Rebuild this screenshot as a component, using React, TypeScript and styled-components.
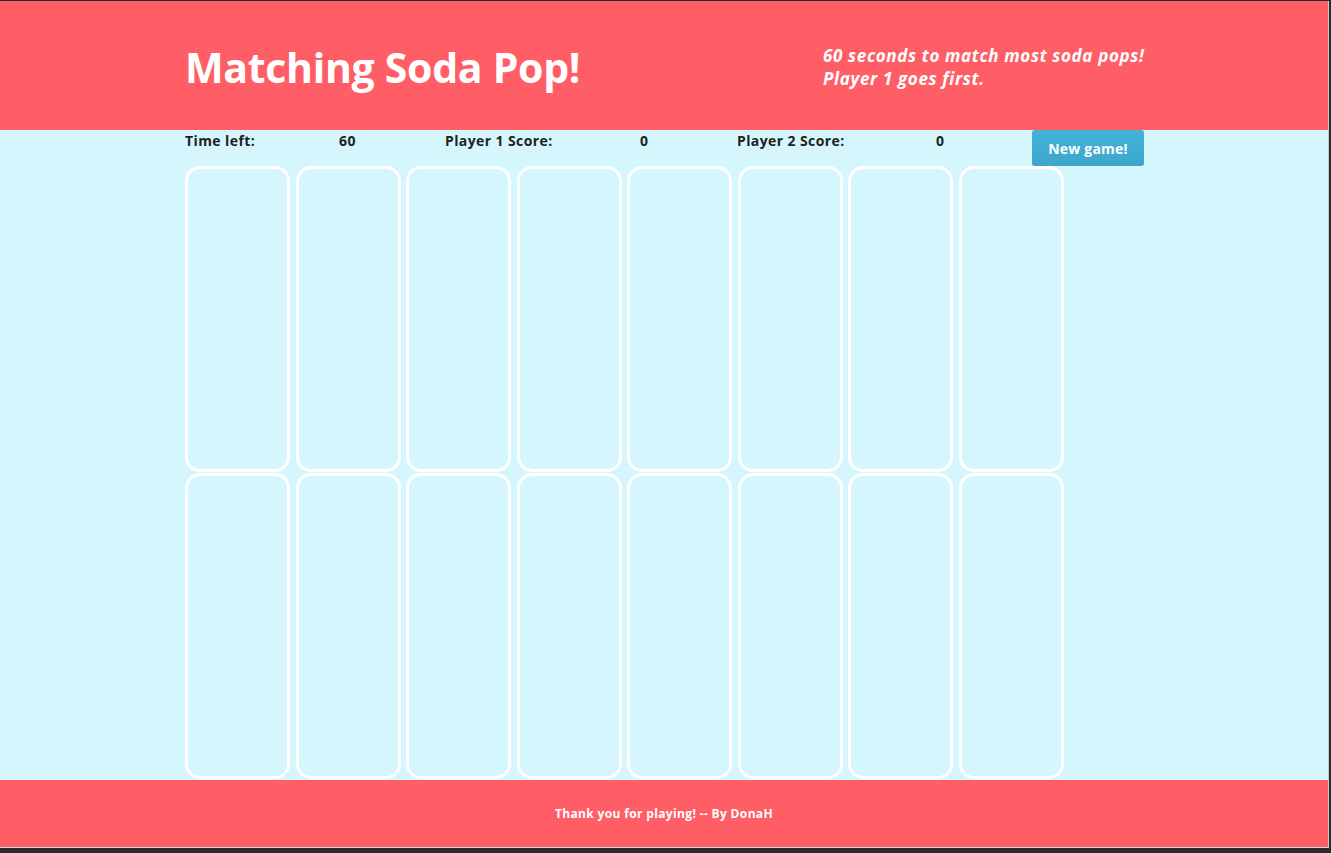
import styled, { createGlobalStyle } from "styled-components";

const CARD_COUNT = 16;

const GlobalStyle = createGlobalStyle`
  html, body {
    margin: 0;
    padding: 0;
    background: #2a2a2a;
  }
  body {
    font-family: "Open Sans", "Liberation Sans", sans-serif;
  }
`;

const App = () => {
  const cards = Array.from({ length: CARD_COUNT }, (_, i) => i);

  return (
    <>
      <GlobalStyle />
      <Page>
        <Header>
          <Container>
            <HeaderRow>
              <Title>Matching Soda Pop!</Title>
              <Tagline>
                60 seconds to match most soda pops!
                <br />
                Player 1 goes first.
              </Tagline>
            </HeaderRow>
          </Container>
        </Header>

        {/* Board */}
        <Board>
          <Container>
            <StatsRow>
              <StatText>Time left:</StatText>
              <StatText>60</StatText>
              <StatText>Player 1 Score:</StatText>
              <StatText>0</StatText>
              <StatText>Player 2 Score:</StatText>
              <StatText>0</StatText>
              <NewGameButton>New game!</NewGameButton>
            </StatsRow>
            <CardGrid>
              {cards.map((c) => (
                <Card key={c} />
              ))}
            </CardGrid>
          </Container>
        </Board>

        <Footer>
          <FooterText>Thank you for playing! -- By DonaH</FooterText>
        </Footer>
      </Page>
    </>
  );
};

export default App;

const Page = styled.div`
  margin: 1px 2px 0 0;
  height: 847px;
  display: flex;
  flex-direction: column;
  background: #d5f6fc;
  border-right: 1px solid #c9c9c9;
  border-bottom: 1px solid #d8d8d8;
  box-sizing: border-box;
`;

const Container = styled.div`
  width: 960px;
  height: 100%;
  margin: 0 auto;
  padding-left: 2px;
`;

const Header = styled.header`
  height: 129px;
  background: #ff5e66;
  flex-shrink: 0;
`;

const HeaderRow = styled.div`
  height: 100%;
  display: flex;
  align-items: center;
  justify-content: space-between;
`;

const Title = styled.h1`
  margin: 0;
  padding-top: 2px;
  color: #fff;
  font-size: 41px;
  font-weight: 700;
  letter-spacing: -0.3px;
`;

const Tagline = styled.p`
  margin: 3px 0 0;
  width: 322px;
  color: #fff;
  font-size: 17px;
  font-style: italic;
  font-weight: 700;
  line-height: 23px;
  letter-spacing: 0.65px;
  white-space: nowrap;
`;

const Board = styled.main`
  flex: 1;
`;

const StatsRow = styled.div`
  display: grid;
  grid-template-columns: 154px 106px 195px 97px 199px 96px 112px;
  align-items: start;
  height: 36px;
`;

const StatText = styled.span`
  padding-top: 1px;
  color: #1f1f1f;
  font-size: 14px;
  font-weight: 700;
  line-height: 20px;
  letter-spacing: 0.4px;
`;

const NewGameButton = styled.button`
  height: 36px;
  border: 0;
  border-radius: 3px;
  background: linear-gradient(#42b4da, #3ea6ca);
  color: #fff;
  font-family: "Open Sans", sans-serif;
  font-size: 14px;
  font-weight: 700;
  letter-spacing: 0.2px;
  cursor: pointer;
`;

const CardGrid = styled.div`
  display: grid;
  grid-template-columns: repeat(8, 105px);
  grid-auto-rows: 306px;
  column-gap: 5.5px;
  row-gap: 1px;
`;

const Card = styled.div`
  box-sizing: border-box;
  border: 3px solid #fff;
  border-radius: 15px;
`;

const Footer = styled.footer`
  height: 67px;
  background: #ff5e66;
  display: flex;
  align-items: center;
  justify-content: center;
  flex-shrink: 0;
`;

const FooterText = styled.p`
  margin: 0;
  color: #fff;
  font-size: 12px;
  font-weight: 700;
  letter-spacing: 0.35px;
`;
